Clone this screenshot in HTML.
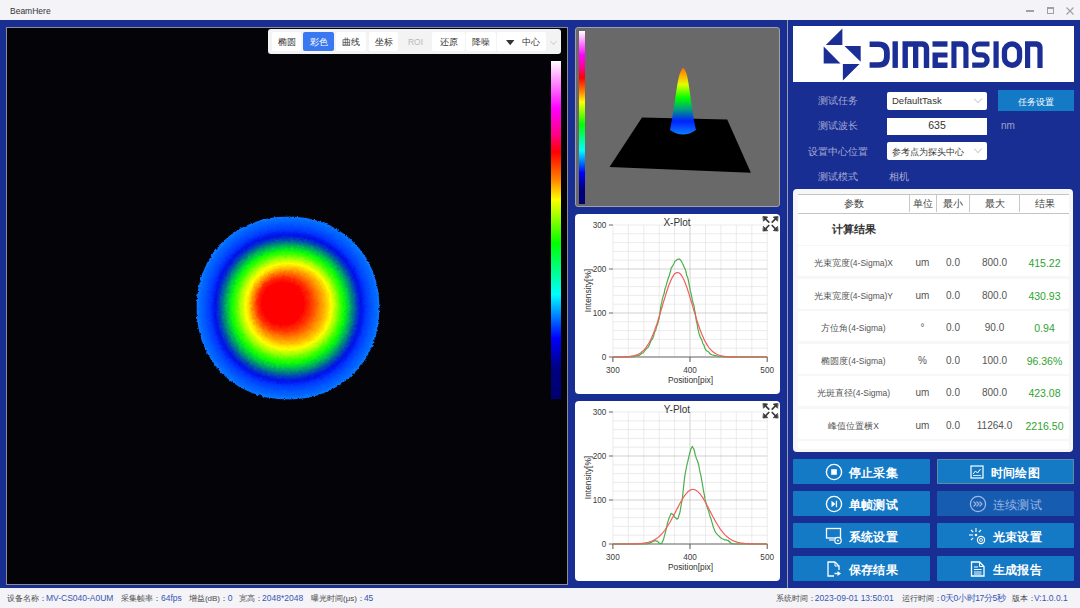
<!DOCTYPE html>
<html><head><meta charset="utf-8"><title>BeamHere</title>
<style>
*{box-sizing:border-box;margin:0;padding:0}
html,body{width:1080px;height:608px;overflow:hidden}
body{position:relative;background:#182e92;font-family:"Liberation Sans",sans-serif;color:#333}
.a{position:absolute}
#title{left:0;top:0;width:1080px;height:20px;background:#f3f3f8;font-size:9px;color:#333}
#status{left:0;top:588px;width:1080px;height:20px;background:#f3f3f8;font-size:8px;color:#4a4a4a;white-space:nowrap}
#status span,#status b{position:absolute;top:5px}
#status b{font-weight:normal;color:#3a56b0;font-size:8.5px;top:4.5px}
#left{left:6px;top:27px;width:562px;height:558px;background:#040408;border:1px solid #8c8c94}
#tb{left:268px;top:29px;width:293px;height:25px;background:#f3f3f3;border-radius:3px}
.tbb{position:absolute;top:3px;height:19px;background:#fff;border-radius:2px;font-size:8.5px;color:#333;text-align:center;line-height:21px}
.tbb.sel{background:#3a78f2;color:#fff}
.tbb.dis{background:transparent;color:#b8b8b8}
#beam{left:9px;top:9px;width:182px;height:182px;clip-path:polygon(182.3px 91.0px,182.1px 98.0px,181.6px 104.4px,180.6px 110.5px,179.4px 116.5px,177.7px 122.3px,175.7px 127.9px,173.4px 133.3px,170.7px 138.5px,167.7px 143.4px,164.4px 148.2px,160.8px 152.6px,156.8px 156.8px,152.6px 160.8px,148.2px 164.4px,143.4px 167.7px,138.5px 170.7px,133.3px 173.4px,127.9px 175.7px,122.3px 177.7px,116.5px 179.4px,110.5px 180.6px,104.4px 181.6px,98.0px 182.1px,91.0px 182.3px,84.0px 182.1px,77.6px 181.6px,71.5px 180.6px,65.5px 179.4px,59.7px 177.7px,54.1px 175.7px,48.7px 173.4px,43.5px 170.7px,38.6px 167.7px,33.8px 164.4px,29.4px 160.8px,25.2px 156.8px,21.2px 152.6px,17.6px 148.2px,14.3px 143.4px,11.3px 138.5px,8.6px 133.3px,6.3px 127.9px,4.3px 122.3px,2.6px 116.5px,1.4px 110.5px,0.4px 104.4px,-0.1px 98.0px,-0.3px 91.0px,-0.1px 84.0px,0.4px 77.6px,1.4px 71.5px,2.6px 65.5px,4.3px 59.7px,6.3px 54.1px,8.6px 48.7px,11.3px 43.5px,14.3px 38.6px,17.6px 33.8px,21.2px 29.4px,25.2px 25.2px,29.4px 21.2px,33.8px 17.6px,38.6px 14.3px,43.5px 11.3px,48.7px 8.6px,54.1px 6.3px,59.7px 4.3px,65.5px 2.6px,71.5px 1.4px,77.6px 0.4px,84.0px -0.1px,91.0px -0.3px,98.0px -0.1px,104.4px 0.4px,110.5px 1.4px,116.5px 2.6px,122.3px 4.3px,127.9px 6.3px,133.3px 8.6px,138.5px 11.3px,143.4px 14.3px,148.2px 17.6px,152.6px 21.2px,156.8px 25.2px,160.8px 29.4px,164.4px 33.8px,167.7px 38.6px,170.7px 43.5px,173.4px 48.7px,175.7px 54.1px,177.7px 59.7px,179.4px 65.5px,180.6px 71.5px,181.6px 77.6px,182.1px 84.0px);
 background:radial-gradient(circle at 85px 86px, #ff0000 0px, #ff0000 21px, rgba(255,40,0,0.6) 28px, rgba(255,128,0,0) 35px),
 radial-gradient(circle at 92px 89px, #ff8000 0px, #ff7000 29px, #ffc000 37px, #ffff00 43px, #a8ff00 48px, #40ff00 53px, rgba(0,255,0,0) 57px),
 radial-gradient(circle at 91px 91px, #20ff00 0px, #10ff00 55px, #00d040 60px, #008080 65px, #0040c0 69px, #0010e8 73px, #0038ff 78px, #0058ff 84px, #0a74ff 91px)}
#cbar{left:551px;top:61px;width:10px;height:338px;background:linear-gradient(to bottom, #ffffff 0%, #ff00ff 14%, #ff0080 22%, #ff0000 27%, #ff8000 35%, #ffff00 41%, #00ff00 54%, #00ffff 69%, #0000ff 82%, #000080 91%, #000070 100%)}
#p3d{left:575px;top:27px;width:205px;height:180px;background:#696969;border:1px solid #a0a0a8;border-radius:3px;overflow:hidden}
.plot{position:absolute;left:575px;width:205px;height:180px;background:#fff;border-radius:4px;overflow:hidden}
#sep{left:787px;top:20px;width:1px;height:568px;background:#9a9ca8}
#logo{left:793px;top:26px;width:281px;height:56px;background:#fff}
.lbl{position:absolute;font-size:10px;color:#a7abd2;white-space:nowrap;text-align:center}
.inp{position:absolute;left:887px;width:100px;background:#fff;border-radius:2px;font-size:9.5px;color:#333;white-space:nowrap}
.chev{position:absolute;right:6px;top:4px;width:6px;height:6px;border-right:1px solid #d0d0d0;border-bottom:1px solid #d0d0d0;transform:rotate(45deg)}
#tbl{left:793px;top:189px;width:280px;height:263px;background:#f7f7f7;border-radius:4px}
.row{position:absolute;left:5px;width:271px;height:30px;background:#fff;border-radius:2px;font-size:10px;color:#555}
.row span{position:absolute;top:1.5px;line-height:30px;text-align:center;white-space:nowrap}
.c0{left:0;width:111px;font-size:8.5px !important}
.c1{left:111px;width:27px}
.c2{left:139px;width:32px}
.c3{left:172px;width:49px}
.c4{left:222px;width:49px;color:#2fa32f;font-size:10.5px;font-weight:500}
.btn{position:absolute;width:137px;height:25px;background:#147ac6;color:#fff;font-size:12px;font-weight:700;border-radius:1px;white-space:nowrap}
.btn .t{position:absolute;top:1.5px;line-height:25px;letter-spacing:0.2px}
.btn svg{position:absolute}
</style></head>
<body>
<!-- title bar -->
<div id="title" class="a">
 <span class="a" style="left:10px;top:6px;font-size:8.5px">BeamHere</span>
 <div class="a" style="left:1026px;top:9.5px;width:8px;height:2px;background:#a0a0a0"></div>
 <div class="a" style="left:1046.5px;top:6.5px;width:7px;height:7.5px;border:1px solid #a0a0a0;border-top-width:2px"></div>
 <svg class="a" style="left:1066px;top:6.5px" width="8" height="8"><path d="M0.5 0.5L7.5 7.5M7.5 0.5L0.5 7.5" stroke="#a0a0a0" stroke-width="1.1"/></svg>
</div>

<!-- left camera view -->
<div id="left" class="a"></div>
<svg width="0" height="0" style="position:absolute"><filter id="jag" x="-5%" y="-5%" width="110%" height="110%"><feTurbulence type="fractalNoise" baseFrequency="0.35" numOctaves="2" seed="4" result="n"/><feDisplacementMap in="SourceGraphic" in2="n" scale="3.2" xChannelSelector="R" yChannelSelector="G"/></filter></svg>
<div class="a" style="left:188px;top:208px;width:200px;height:200px;filter:url(#jag)"><svg class="a" style="left:0;top:0" width="200" height="200"><g transform="translate(9 9)"><path d="M182.5 91.0L181.7 105.0L179.1 117.8L175.0 129.8L169.2 141.0L162.0 151.1L153.4 160.0L143.6 167.5L132.7 173.7L120.9 178.2L108.3 181.2L94.7 182.4L80.3 182.0L67.3 179.9L55.1 176.1L43.7 170.8L33.4 163.9L24.1 155.7L16.2 146.2L9.7 135.5L4.8 123.9L1.4 111.5L-0.3 98.2L-0.3 83.8L1.4 70.5L4.8 58.1L9.7 46.5L16.2 35.8L24.1 26.3L33.4 18.1L43.7 11.2L55.1 5.9L67.3 2.1L80.3 -0.0L94.7 -0.4L108.3 0.8L120.9 3.8L132.7 8.3L143.6 14.5L153.4 22.0L162.0 30.9L169.2 41.0L175.0 52.2L179.1 64.2L181.7 77.0Z" fill="#0976ff"/><path d="M181.5 91.0L180.7 104.8L178.2 117.5L174.0 129.4L168.4 140.4L161.2 150.4L152.7 159.2L143.0 166.7L132.3 172.8L120.6 177.3L108.1 180.2L94.7 181.4L80.5 181.0L67.6 178.9L55.5 175.2L44.2 169.9L34.0 163.1L24.9 155.0L17.0 145.6L10.6 135.0L5.7 123.6L2.4 111.3L0.7 98.2L0.7 83.8L2.4 70.7L5.7 58.4L10.6 47.0L17.0 36.4L24.9 27.0L34.0 18.9L44.2 12.1L55.5 6.8L67.6 3.1L80.5 1.0L94.7 0.6L108.1 1.8L120.6 4.7L132.3 9.2L143.0 15.3L152.7 22.8L161.2 31.6L168.4 41.6L174.0 52.6L178.2 64.5L180.7 77.2Z" fill="#0872ff"/><path d="M180.5 91.0L179.6 105.0L177.0 117.8L172.8 129.8L166.9 140.8L159.5 150.8L150.8 159.5L140.8 166.9L129.8 172.8L117.8 177.0L105.0 179.6L91.0 180.5L77.0 179.6L64.2 177.0L52.2 172.8L41.2 166.9L31.2 159.5L22.5 150.8L15.1 140.8L9.2 129.8L5.0 117.8L2.4 105.0L1.5 91.0L2.4 77.0L5.0 64.2L9.2 52.2L15.1 41.2L22.5 31.2L31.2 22.5L41.2 15.1L52.2 9.2L64.2 5.0L77.0 2.4L91.0 1.5L105.0 2.4L117.8 5.0L129.8 9.2L140.8 15.1L150.8 22.5L159.5 31.2L166.9 41.2L172.8 52.2L177.0 64.2L179.6 77.0Z" fill="#076dff"/><path d="M179.5 91.0L178.6 104.8L176.1 117.5L171.9 129.3L166.1 140.3L158.8 150.1L150.1 158.8L140.3 166.1L129.3 171.9L117.5 176.1L104.8 178.6L91.0 179.5L77.2 178.6L64.5 176.1L52.7 171.9L41.7 166.1L31.9 158.8L23.2 150.1L15.9 140.3L10.1 129.3L5.9 117.5L3.4 104.8L2.5 91.0L3.4 77.2L5.9 64.5L10.1 52.7L15.9 41.7L23.2 31.9L31.9 23.2L41.7 15.9L52.7 10.1L64.5 5.9L77.2 3.4L91.0 2.5L104.8 3.4L117.5 5.9L129.3 10.1L140.3 15.9L150.1 23.2L158.8 31.9L166.1 41.7L171.9 52.7L176.1 64.5L178.6 77.2Z" fill="#0569ff"/><path d="M178.5 91.0L177.6 105.0L175.0 117.7L170.6 129.7L164.6 140.7L157.1 150.5L148.2 159.1L138.0 166.3L126.8 171.8L114.6 175.8L101.6 178.0L87.3 178.4L73.8 177.1L61.2 174.0L49.5 169.3L38.8 162.9L29.2 155.0L21.0 145.7L14.2 135.3L9.0 123.8L5.5 111.5L3.7 98.2L3.7 83.8L5.5 70.5L9.0 58.2L14.2 46.7L21.0 36.3L29.2 27.0L38.8 19.1L49.5 12.7L61.2 8.0L73.8 4.9L87.3 3.6L101.6 4.0L114.6 6.2L126.8 10.2L138.0 15.7L148.2 22.9L157.1 31.5L164.6 41.3L170.6 52.3L175.0 64.3L177.6 77.0Z" fill="#0465ff"/><path d="M177.5 91.0L176.6 104.8L174.0 117.4L169.7 129.2L163.8 140.1L156.3 149.8L147.5 158.3L137.5 165.4L126.4 170.9L114.4 174.8L101.5 177.0L87.3 177.4L74.0 176.1L61.5 173.1L49.9 168.4L39.4 162.0L29.9 154.3L21.8 145.1L15.1 134.8L9.9 123.5L6.5 111.2L4.7 98.2L4.7 83.8L6.5 70.8L9.9 58.5L15.1 47.2L21.8 36.9L29.9 27.7L39.4 20.0L49.9 13.6L61.5 8.9L74.0 5.9L87.3 4.6L101.5 5.0L114.4 7.2L126.4 11.1L137.5 16.6L147.5 23.7L156.3 32.2L163.8 41.9L169.7 52.8L174.0 64.6L176.6 77.2Z" fill="#0361ff"/><path d="M176.5 91.0L175.6 105.0L172.9 117.7L168.4 129.6L162.3 140.5L154.6 150.2L145.5 158.6L135.2 165.6L123.8 170.9L111.4 174.5L98.2 176.3L83.8 176.3L70.6 174.5L58.2 170.9L46.8 165.6L36.5 158.6L27.4 150.2L19.7 140.5L13.6 129.6L9.1 117.7L6.4 105.0L5.5 91.0L6.4 77.0L9.1 64.3L13.6 52.4L19.7 41.5L27.4 31.8L36.5 23.4L46.8 16.4L58.2 11.1L70.6 7.5L83.8 5.7L98.2 5.7L111.4 7.5L123.8 11.1L135.2 16.4L145.5 23.4L154.6 31.8L162.3 41.5L168.4 52.4L172.9 64.3L175.6 77.0Z" fill="#015cff"/><path d="M175.5 91.0L174.6 104.8L171.9 117.4L167.5 129.2L161.5 139.9L153.9 149.5L144.9 157.8L134.7 164.7L123.4 169.9L111.2 173.5L98.1 175.3L83.9 175.3L70.8 173.5L58.6 169.9L47.3 164.7L37.1 157.8L28.1 149.5L20.5 139.9L14.5 129.2L10.1 117.4L7.4 104.8L6.5 91.0L7.4 77.2L10.1 64.6L14.5 52.8L20.5 42.1L28.1 32.5L37.1 24.2L47.3 17.3L58.6 12.1L70.8 8.5L83.9 6.7L98.1 6.7L111.2 8.5L123.4 12.1L134.7 17.3L144.9 24.2L153.9 32.5L161.5 42.1L167.5 52.8L171.9 64.6L174.6 77.2Z" fill="#0058ff"/><path d="M174.5 91.0L173.6 104.9L170.8 117.7L166.2 129.5L160.0 140.3L152.1 149.9L142.8 158.1L132.3 164.8L120.7 169.8L108.2 173.0L94.7 174.4L80.4 174.0L67.4 171.7L55.4 167.5L44.3 161.7L34.4 154.2L25.8 145.3L18.7 135.1L13.3 123.7L9.6 111.4L7.7 98.2L7.7 83.8L9.6 70.6L13.3 58.3L18.7 46.9L25.8 36.7L34.4 27.8L44.3 20.3L55.4 14.5L67.4 10.3L80.4 8.0L94.7 7.6L108.2 9.0L120.7 12.2L132.3 17.2L142.8 23.9L152.1 32.1L160.0 41.7L166.2 52.5L170.8 64.3L173.6 77.1Z" fill="#0053ff"/><path d="M173.5 91.0L172.6 104.8L169.8 117.4L165.3 129.1L159.1 139.7L151.4 149.2L142.2 157.3L131.8 163.9L120.4 168.9L108.0 172.1L94.7 173.4L80.5 173.0L67.7 170.7L55.8 166.6L44.8 160.8L35.0 153.5L26.6 144.6L19.6 134.5L14.2 123.3L10.6 111.2L8.7 98.1L8.7 83.9L10.6 70.8L14.2 58.7L19.6 47.5L26.6 37.4L35.0 28.5L44.8 21.2L55.8 15.4L67.7 11.3L80.5 9.0L94.7 8.6L108.0 9.9L120.4 13.1L131.8 18.1L142.2 24.7L151.4 32.8L159.1 42.3L165.3 52.9L169.8 64.6L172.6 77.2Z" fill="#004dff"/><path d="M172.5 91.0L171.5 104.9L168.7 117.6L164.0 129.4L157.6 140.1L149.6 149.6L140.1 157.6L129.4 164.0L117.6 168.7L104.9 171.5L91.0 172.5L77.1 171.5L64.4 168.7L52.6 164.0L41.9 157.6L32.4 149.6L24.4 140.1L18.0 129.4L13.3 117.6L10.5 104.9L9.5 91.0L10.5 77.1L13.3 64.4L18.0 52.6L24.4 41.9L32.4 32.4L41.9 24.4L52.6 18.0L64.4 13.3L77.1 10.5L91.0 9.5L104.9 10.5L117.6 13.3L129.4 18.0L140.1 24.4L149.6 32.4L157.6 41.9L164.0 52.6L168.7 64.4L171.5 77.1Z" fill="#0048ff"/><path d="M171.5 91.0L170.6 104.8L167.7 117.3L163.1 128.9L156.8 139.5L148.9 148.9L139.5 156.8L128.9 163.1L117.3 167.7L104.8 170.6L91.0 171.5L77.2 170.6L64.7 167.7L53.1 163.1L42.5 156.8L33.1 148.9L25.2 139.5L18.9 128.9L14.3 117.3L11.4 104.8L10.5 91.0L11.4 77.2L14.3 64.7L18.9 53.1L25.2 42.5L33.1 33.1L42.5 25.2L53.1 18.9L64.7 14.3L77.2 11.4L91.0 10.5L104.8 11.4L117.3 14.3L128.9 18.9L139.5 25.2L148.9 33.1L156.8 42.5L163.1 53.1L167.7 64.7L170.6 77.2Z" fill="#0043ff"/><path d="M170.5 91.0L169.5 104.9L166.6 117.6L161.8 129.3L155.2 139.9L147.0 149.2L137.4 157.0L126.5 163.2L114.5 167.5L101.6 169.9L87.3 170.4L73.8 169.0L61.4 165.6L49.9 160.3L39.6 153.3L30.7 144.8L23.3 134.8L17.6 123.6L13.7 111.4L11.7 98.2L11.7 83.8L13.7 70.6L17.6 58.4L23.3 47.2L30.7 37.2L39.6 28.7L49.9 21.7L61.4 16.4L73.8 13.0L87.3 11.6L101.6 12.1L114.5 14.5L126.5 18.8L137.4 25.0L147.0 32.8L155.2 42.1L161.8 52.7L166.6 64.4L169.5 77.1Z" fill="#003dff"/><path d="M169.5 91.0L168.5 104.7L165.6 117.3L160.9 128.8L154.4 139.3L146.3 148.5L136.8 156.2L126.0 162.3L114.2 166.5L101.5 169.0L87.3 169.4L74.0 168.0L61.8 164.6L50.4 159.5L40.3 152.6L31.4 144.1L24.1 134.2L18.5 123.2L14.7 111.1L12.7 98.1L12.7 83.9L14.7 70.9L18.5 58.8L24.1 47.8L31.4 37.9L40.3 29.4L50.4 22.5L61.8 17.4L74.0 14.0L87.3 12.6L101.5 13.0L114.2 15.5L126.0 19.7L136.8 25.8L146.3 33.5L154.4 42.7L160.9 53.2L165.6 64.7L168.5 77.3Z" fill="#0038ff"/><path d="M168.5 91.0L167.5 104.9L164.5 117.5L159.6 129.2L152.9 139.7L144.5 148.9L134.6 156.4L123.5 162.3L111.3 166.2L98.2 168.2L83.8 168.2L70.7 166.2L58.5 162.3L47.4 156.4L37.5 148.9L29.1 139.7L22.4 129.2L17.5 117.5L14.5 104.9L13.5 91.0L14.5 77.1L17.5 64.5L22.4 52.8L29.1 42.3L37.5 33.1L47.4 25.6L58.5 19.7L70.7 15.8L83.8 13.8L98.2 13.8L111.3 15.8L123.5 19.7L134.6 25.6L144.5 33.1L152.9 42.3L159.6 52.8L164.5 64.5L167.5 77.1Z" fill="#0030fa"/><path d="M167.5 91.0L166.5 104.7L163.5 117.2L158.7 128.7L152.1 139.1L143.8 148.1L134.1 155.6L123.1 161.4L111.1 165.3L98.1 167.3L83.9 167.3L70.9 165.3L58.9 161.4L47.9 155.6L38.2 148.1L29.9 139.1L23.3 128.7L18.5 117.2L15.5 104.7L14.5 91.0L15.5 77.3L18.5 64.8L23.3 53.3L29.9 42.9L38.2 33.9L47.9 26.4L58.9 20.6L70.9 16.7L83.9 14.7L98.1 14.7L111.1 16.7L123.1 20.6L134.1 26.4L143.8 33.9L152.1 42.9L158.7 53.3L163.5 64.8L166.5 77.3Z" fill="#0028f6"/><path d="M166.5 91.0L165.5 104.9L162.4 117.5L157.3 129.1L150.4 139.5L141.9 148.5L131.8 155.8L120.5 161.3L108.1 164.9L94.7 166.4L80.4 165.9L67.6 163.3L55.7 158.8L45.0 152.3L35.6 144.2L27.9 134.5L21.9 123.4L17.8 111.3L15.8 98.2L15.8 83.8L17.8 70.7L21.9 58.6L27.9 47.5L35.6 37.8L45.0 29.7L55.7 23.2L67.6 18.7L80.4 16.1L94.7 15.6L108.1 17.1L120.5 20.7L131.8 26.2L141.9 33.5L150.4 42.5L157.3 52.9L162.4 64.5L165.5 77.1Z" fill="#0020f1"/><path d="M165.5 91.0L164.5 104.7L161.4 117.2L156.5 128.6L149.7 138.8L141.2 147.7L131.3 154.9L120.1 160.4L107.9 163.9L94.7 165.4L80.6 164.9L67.9 162.4L56.2 157.9L45.6 151.5L36.4 143.5L28.7 133.9L22.8 123.0L18.8 111.0L16.8 98.1L16.8 83.9L18.8 71.0L22.8 59.0L28.7 48.1L36.4 38.5L45.6 30.5L56.2 24.1L67.9 19.6L80.6 17.1L94.7 16.6L107.9 18.1L120.1 21.6L131.3 27.1L141.2 34.3L149.7 43.2L156.5 53.4L161.4 64.8L164.5 77.3Z" fill="#0018ed"/><path d="M164.5 91.0L163.4 104.9L160.3 117.5L155.1 129.0L148.0 139.2L139.2 148.0L129.0 155.1L117.5 160.3L104.9 163.4L91.0 164.5L77.1 163.4L64.5 160.3L53.0 155.1L42.8 148.0L34.0 139.2L26.9 129.0L21.7 117.5L18.6 104.9L17.5 91.0L18.6 77.1L21.7 64.5L26.9 53.0L34.0 42.8L42.8 34.0L53.0 26.9L64.5 21.7L77.1 18.6L91.0 17.5L104.9 18.6L117.5 21.7L129.0 26.9L139.2 34.0L148.0 42.8L155.1 53.0L160.3 64.5L163.4 77.1Z" fill="#0010e8"/><path d="M163.5 91.0L162.5 104.7L159.3 117.1L154.2 128.5L147.2 138.6L138.6 147.2L128.5 154.2L117.1 159.3L104.7 162.5L91.0 163.5L77.3 162.5L64.9 159.3L53.5 154.2L43.4 147.2L34.8 138.6L27.8 128.5L22.7 117.1L19.5 104.7L18.5 91.0L19.5 77.3L22.7 64.9L27.8 53.5L34.8 43.4L43.4 34.8L53.5 27.8L64.9 22.7L77.3 19.5L91.0 18.5L104.7 19.5L117.1 22.7L128.5 27.8L138.6 34.8L147.2 43.4L154.2 53.5L159.3 64.9L162.5 77.3Z" fill="#001cde"/><path d="M162.5 91.0L161.4 104.9L158.2 117.4L152.8 128.9L145.6 139.0L136.6 147.6L126.1 154.3L114.4 159.2L101.6 161.9L87.3 162.4L73.9 160.8L61.6 157.0L50.5 151.2L40.7 143.5L32.6 134.1L26.3 123.3L22.0 111.3L19.8 98.2L19.8 83.8L22.0 70.7L26.3 58.7L32.6 47.9L40.7 38.5L50.5 30.8L61.6 25.0L73.9 21.2L87.3 19.6L101.6 20.1L114.4 22.8L126.1 27.7L136.6 34.4L145.6 43.0L152.8 53.1L158.2 64.6L161.4 77.1Z" fill="#0028d4"/><path d="M161.5 91.0L160.4 104.7L157.2 117.0L152.0 128.3L144.8 138.3L136.0 146.8L125.6 153.5L114.0 158.2L101.4 160.9L87.3 161.4L74.1 159.8L62.0 156.1L51.0 150.3L41.4 142.8L33.4 133.5L27.2 122.8L22.9 111.0L20.8 98.1L20.8 83.9L22.9 71.0L27.2 59.2L33.4 48.5L41.4 39.2L51.0 31.7L62.0 25.9L74.1 22.2L87.3 20.6L101.4 21.1L114.0 23.8L125.6 28.5L136.0 35.2L144.8 43.7L152.0 53.7L157.2 65.0L160.4 77.3Z" fill="#0034ca"/><path d="M160.5 91.0L159.4 104.8L156.0 117.3L150.5 128.7L143.1 138.7L133.9 147.0L123.2 153.5L111.2 157.9L98.2 160.2L83.8 160.2L70.8 157.9L58.8 153.5L48.1 147.0L38.9 138.7L31.5 128.7L26.0 117.3L22.6 104.8L21.5 91.0L22.6 77.1L26.0 64.6L31.5 53.2L38.9 43.3L48.1 34.9L58.8 28.4L70.8 24.0L83.8 21.7L98.2 21.7L111.2 24.0L123.2 28.4L133.9 34.9L143.1 43.3L150.5 53.2L156.0 64.6L159.4 77.1Z" fill="#0040c0"/><path d="M159.5 90.9L158.4 104.5L155.1 116.9L149.7 128.1L142.4 137.9L133.3 146.2L122.7 152.5L110.9 156.9L98.1 159.1L83.9 159.1L71.1 156.9L59.3 152.5L48.7 146.2L39.6 137.9L32.3 128.1L26.9 116.9L23.6 104.5L22.5 90.9L23.6 77.3L26.9 64.9L32.3 53.7L39.6 43.9L48.7 35.6L59.3 29.3L71.1 24.9L83.9 22.7L98.1 22.7L110.9 24.9L122.7 29.3L133.3 35.6L142.4 43.9L149.7 53.7L155.1 64.9L158.4 77.3Z" fill="#0050b0"/><path d="M158.5 90.8L157.3 104.7L153.9 117.1L148.3 128.4L140.6 138.2L131.2 146.4L120.2 152.5L108.0 156.5L94.7 158.3L80.5 157.7L67.7 154.8L56.1 149.7L45.9 142.5L37.3 133.5L30.7 122.9L26.1 111.0L23.8 98.0L23.8 83.7L26.1 70.6L30.7 58.7L37.3 48.1L45.9 39.1L56.1 32.0L67.7 26.9L80.5 24.0L94.7 23.4L108.0 25.1L120.2 29.2L131.2 35.3L140.6 43.4L148.3 53.3L153.9 64.5L157.3 77.0Z" fill="#0060a0"/><path d="M157.5 90.8L156.4 104.4L153.0 116.7L147.4 127.8L139.9 137.5L130.6 145.5L119.8 151.5L107.8 155.5L94.7 157.2L80.6 156.6L68.1 153.8L56.6 148.8L46.6 141.7L38.1 132.8L31.6 122.4L27.1 110.7L24.8 97.8L24.8 83.7L27.1 70.9L31.6 59.1L38.1 48.7L46.6 39.8L56.6 32.8L68.1 27.8L80.6 24.9L94.7 24.3L107.8 26.1L119.8 30.0L130.6 36.1L139.9 44.1L147.4 53.7L153.0 64.9L156.4 77.1Z" fill="#007090"/><path d="M156.5 90.7L155.3 104.5L151.7 116.9L145.9 128.1L138.1 137.8L128.4 145.6L117.2 151.4L104.8 155.0L91.0 156.2L77.2 155.0L64.8 151.4L53.6 145.6L43.9 137.8L36.1 128.1L30.3 116.9L26.7 104.5L25.5 90.7L26.7 76.9L30.3 64.5L36.1 53.3L43.9 43.6L53.6 35.8L64.8 30.0L77.2 26.4L91.0 25.2L104.8 26.4L117.2 30.0L128.4 35.8L138.1 43.6L145.9 53.3L151.7 64.5L155.3 76.9Z" fill="#008080"/><path d="M155.5 90.6L154.3 104.2L150.8 116.5L145.1 127.5L137.4 137.0L127.9 144.7L116.8 150.4L104.6 154.0L91.0 155.1L77.4 154.0L65.2 150.4L54.1 144.7L44.6 137.0L36.9 127.5L31.2 116.5L27.7 104.2L26.5 90.6L27.7 77.0L31.2 64.8L36.9 53.8L44.6 44.3L54.1 36.5L65.2 30.8L77.4 27.3L91.0 26.1L104.6 27.3L116.8 30.8L127.9 36.5L137.4 44.3L145.1 53.8L150.8 64.8L154.3 77.0Z" fill="#009073"/><path d="M154.5 90.6L153.3 104.4L149.6 116.7L143.6 127.8L135.5 137.3L125.6 144.9L114.2 150.3L101.5 153.4L87.3 154.0L74.0 152.1L61.9 147.9L51.2 141.3L42.2 132.8L35.1 122.5L30.3 110.7L27.8 97.7L27.8 83.4L30.3 70.4L35.1 58.7L42.2 48.4L51.2 39.8L61.9 33.3L74.0 29.0L87.3 27.1L101.5 27.8L114.2 30.8L125.6 36.3L135.5 43.8L143.6 53.3L149.6 64.4L153.3 76.8Z" fill="#00a066"/><path d="M153.5 90.5L152.3 104.1L148.7 116.3L142.8 127.2L134.8 136.5L125.1 144.0L113.8 149.3L101.4 152.3L87.4 152.9L74.3 151.1L62.4 146.9L51.8 140.5L43.0 132.1L36.0 121.9L31.2 110.3L28.8 97.6L28.8 83.4L31.2 70.7L36.0 59.1L43.0 48.9L51.8 40.5L62.4 34.1L74.3 29.9L87.4 28.1L101.4 28.7L113.8 31.7L125.1 37.0L134.8 44.5L142.8 53.8L148.7 64.7L152.3 76.9Z" fill="#00b05a"/><path d="M152.5 90.4L151.2 104.2L147.4 116.5L141.3 127.5L132.9 136.8L122.8 144.1L111.1 149.1L98.2 151.6L83.8 151.6L70.9 149.1L59.2 144.1L49.1 136.8L40.7 127.5L34.6 116.5L30.8 104.2L29.5 90.4L30.8 76.7L34.6 64.3L40.7 53.4L49.1 44.1L59.2 36.8L70.9 31.8L83.8 29.3L98.2 29.3L111.1 31.8L122.8 36.8L132.9 44.1L141.3 53.4L147.4 64.3L151.2 76.7Z" fill="#00c04d"/><path d="M151.5 90.4L150.2 103.9L146.5 116.1L140.4 126.8L132.3 136.0L122.3 143.1L110.8 148.0L98.0 150.6L84.0 150.6L71.2 148.0L59.7 143.1L49.7 136.0L41.6 126.8L35.5 116.1L31.8 103.9L30.5 90.4L31.8 76.8L35.5 64.7L41.6 53.9L49.7 44.8L59.7 37.6L71.2 32.7L84.0 30.2L98.0 30.2L110.8 32.7L122.3 37.6L132.3 44.8L140.4 53.9L146.5 64.7L150.2 76.8Z" fill="#00d040"/><path d="M150.5 90.3L149.2 104.1L145.3 116.3L138.9 127.2L130.3 136.2L119.9 143.2L107.9 147.7L94.7 149.7L80.5 149.1L67.9 145.8L56.7 140.0L47.1 132.0L39.6 122.0L34.5 110.4L31.8 97.5L31.8 83.1L34.5 70.2L39.6 58.6L47.1 48.6L56.7 40.6L67.9 34.8L80.5 31.5L94.7 30.9L107.9 32.9L119.9 37.4L130.3 44.4L138.9 53.4L145.3 64.3L149.2 76.5Z" fill="#04dc30"/><path d="M149.5 90.2L148.2 103.8L144.3 115.8L138.1 126.5L129.7 135.4L119.4 142.2L107.7 146.7L94.6 148.7L80.7 148.0L68.3 144.8L57.3 139.1L47.9 131.2L40.5 121.4L35.4 110.0L32.8 97.3L32.8 83.2L35.4 70.5L40.5 59.1L47.9 49.3L57.3 41.4L68.3 35.7L80.7 32.5L94.6 31.8L107.7 33.8L119.4 38.2L129.7 45.1L138.1 54.0L144.3 64.6L148.2 76.7Z" fill="#08e820"/><path d="M148.5 90.2L147.1 103.9L143.1 116.1L136.5 126.8L127.7 135.7L117.0 142.2L104.7 146.3L91.0 147.7L77.3 146.3L65.0 142.2L54.3 135.7L45.5 126.8L38.9 116.1L34.9 103.9L33.5 90.2L34.9 76.4L38.9 64.2L45.5 53.5L54.3 44.7L65.0 38.1L77.3 34.0L91.0 32.7L104.7 34.0L117.0 38.1L127.7 44.7L136.5 53.5L143.1 64.2L147.1 76.4Z" fill="#0cf310"/><path d="M147.5 90.1L146.2 103.6L142.2 115.6L135.7 126.1L127.0 134.8L116.5 141.3L104.5 145.3L91.0 146.6L77.5 145.3L65.5 141.3L55.0 134.8L46.3 126.1L39.8 115.6L35.8 103.6L34.5 90.1L35.8 76.6L39.8 64.6L46.3 54.1L55.0 45.4L65.5 38.9L77.5 34.9L91.0 33.6L104.5 34.9L116.5 38.9L127.0 45.4L135.7 54.1L142.2 64.6L146.2 76.6Z" fill="#10ff00"/><path d="M146.5 90.0L145.1 103.8L140.9 115.9L134.1 126.5L125.0 135.0L114.0 141.2L101.5 144.7L87.3 145.4L74.1 143.3L62.3 138.4L52.2 131.0L44.2 121.4L38.7 110.0L35.9 97.2L35.9 82.9L38.7 70.1L44.2 58.7L52.2 49.0L62.3 41.6L74.1 36.8L87.3 34.6L101.5 35.3L114.0 38.9L125.0 45.0L134.1 53.6L140.9 64.2L145.1 76.3Z" fill="#20ff00"/><path d="M145.5 90.0L144.1 103.4L140.0 115.4L133.3 125.7L124.4 134.1L113.6 140.2L101.3 143.7L87.4 144.4L74.4 142.3L62.9 137.5L52.9 130.2L45.1 120.8L39.7 109.6L36.9 97.0L36.9 83.0L39.7 70.3L45.1 59.2L52.9 49.7L62.9 42.4L74.4 37.6L87.4 35.6L101.3 36.3L113.6 39.7L124.4 45.8L133.3 54.2L140.0 64.6L144.1 76.5Z" fill="#30ff00"/><path d="M144.6 89.9L143.1 103.6L138.7 115.7L131.7 126.1L122.3 134.3L111.0 140.1L98.2 143.0L83.9 143.0L71.1 140.1L59.8 134.3L50.4 126.1L43.4 115.7L39.0 103.6L37.5 89.9L39.0 76.2L43.4 64.1L50.4 53.7L59.8 45.5L71.1 39.7L83.9 36.8L98.2 36.8L111.0 39.7L122.3 45.5L131.7 53.7L138.7 64.1L143.1 76.2Z" fill="#40ff00"/><path d="M143.6 89.8L142.1 103.3L137.8 115.1L130.9 125.3L121.7 133.4L110.6 139.1L98.1 142.0L84.1 142.0L71.5 139.1L60.4 133.4L51.2 125.3L44.3 115.1L40.0 103.3L38.6 89.8L40.0 76.4L44.3 64.5L51.2 54.3L60.4 46.2L71.5 40.6L84.1 37.7L98.1 37.7L110.6 40.6L121.7 46.2L130.9 54.3L137.8 64.5L142.1 76.4Z" fill="#55ff00"/><path d="M142.6 89.8L141.1 103.5L136.5 115.5L129.2 125.7L119.5 133.6L107.9 138.9L94.8 141.2L80.7 140.4L68.3 136.6L57.6 129.9L49.0 120.8L43.1 109.6L40.0 96.9L40.0 82.6L43.1 69.9L49.0 58.7L57.6 49.6L68.3 42.9L80.7 39.1L94.8 38.4L107.9 40.7L119.5 45.9L129.2 53.9L136.5 64.1L141.1 76.1Z" fill="#6aff00"/><path d="M141.7 89.7L140.1 103.1L135.7 114.9L128.5 124.9L119.0 132.7L107.7 137.8L94.8 140.1L80.9 139.3L68.8 135.6L58.3 129.1L49.9 120.1L44.0 109.2L41.0 96.7L41.0 82.7L44.0 70.2L49.9 59.3L58.3 50.3L68.8 43.8L80.9 40.1L94.8 39.3L107.7 41.6L119.0 46.7L128.5 54.5L135.7 64.5L140.1 76.3Z" fill="#7eff00"/><path d="M140.7 89.6L139.1 103.3L134.3 115.2L126.8 125.2L116.8 132.8L104.8 137.5L91.2 139.1L77.5 137.5L65.6 132.8L55.6 125.2L48.0 115.2L43.3 103.3L41.7 89.6L43.3 76.0L48.0 64.1L55.6 54.0L65.6 46.5L77.5 41.7L91.2 40.1L104.8 41.7L116.8 46.5L126.8 54.0L134.3 64.1L139.1 76.0Z" fill="#93ff00"/><path d="M139.7 89.6L138.1 103.0L133.5 114.6L126.1 124.4L116.3 131.9L104.6 136.5L91.2 138.1L77.8 136.5L66.2 131.9L56.4 124.4L48.9 114.6L44.3 103.0L42.7 89.6L44.3 76.2L48.9 64.5L56.4 54.7L66.2 47.3L77.8 42.6L91.2 41.1L104.6 42.6L116.3 47.3L126.1 54.7L133.5 64.5L138.1 76.2Z" fill="#a8ff00"/><path d="M138.8 89.5L137.1 103.1L132.1 115.0L124.3 124.7L113.9 131.9L101.7 136.1L87.6 136.9L74.5 134.4L63.1 128.7L54.0 120.1L47.5 109.3L44.2 96.6L44.2 82.4L47.5 69.7L54.0 58.9L63.1 50.3L74.5 44.6L87.6 42.1L101.7 42.9L113.9 47.1L124.3 54.3L132.1 64.0L137.1 75.9Z" fill="#b9ff00"/><path d="M137.8 89.4L136.1 102.8L131.3 114.4L123.6 123.9L113.5 131.0L101.5 135.0L87.7 135.8L74.9 133.4L63.8 127.8L54.8 119.4L48.5 108.8L45.2 96.4L45.2 82.5L48.5 70.1L54.8 59.4L63.8 51.1L74.9 45.5L87.7 43.0L101.5 43.9L113.5 47.9L123.6 54.9L131.3 64.5L136.1 76.1Z" fill="#cbff00"/><path d="M136.8 89.4L135.1 103.0L129.9 114.7L121.7 124.2L111.0 130.9L98.4 134.4L84.2 134.4L71.6 130.9L60.9 124.2L52.7 114.7L47.6 103.0L45.8 89.4L47.6 75.8L52.7 64.0L60.9 54.5L71.6 47.8L84.2 44.3L98.4 44.3L111.0 47.8L121.7 54.5L129.9 64.0L135.1 75.8Z" fill="#dcff00"/><path d="M135.8 89.3L134.1 102.6L129.1 114.1L121.1 123.4L110.6 130.0L98.3 133.4L84.4 133.4L72.1 130.0L61.6 123.4L53.6 114.1L48.6 102.6L46.8 89.3L48.6 76.0L53.6 64.5L61.6 55.2L72.1 48.6L84.4 45.2L98.3 45.2L110.6 48.6L121.1 55.2L129.1 64.5L134.1 76.0Z" fill="#eeff00"/><path d="M134.9 89.2L133.0 102.8L127.7 114.4L119.1 123.6L108.1 129.9L95.1 132.6L81.0 131.7L68.9 127.2L59.0 119.4L52.0 108.9L48.3 96.3L48.3 82.1L52.0 69.6L59.0 59.1L68.9 51.3L81.0 46.8L95.1 45.8L108.1 48.6L119.1 54.8L127.7 64.0L133.0 75.6Z" fill="#ffff00"/><path d="M133.9 89.2L132.1 102.4L126.9 113.8L118.5 122.8L107.7 128.9L95.0 131.6L81.3 130.7L69.5 126.2L59.8 118.6L52.9 108.4L49.4 96.1L49.4 82.2L52.9 70.0L59.8 59.7L69.5 52.1L81.3 47.7L95.0 46.8L107.7 49.5L118.5 55.5L126.9 64.6L132.1 75.9Z" fill="#fff200"/><path d="M132.9 89.1L131.0 102.7L125.4 114.1L116.5 123.0L105.0 128.7L91.5 130.6L77.9 128.7L66.4 123.0L57.5 114.1L51.9 102.7L50.0 89.1L51.9 75.5L57.5 64.1L66.4 55.2L77.9 49.5L91.4 47.6L105.0 49.5L116.5 55.2L125.4 64.1L131.0 75.5Z" fill="#ffe500"/><path d="M132.0 89.0L130.1 102.3L124.6 113.4L115.9 122.1L104.7 127.6L91.5 129.5L78.2 127.6L67.1 122.1L58.4 113.4L52.9 102.3L51.0 89.0L52.9 75.8L58.4 64.6L67.1 55.9L78.2 50.4L91.5 48.5L104.7 50.4L115.9 55.9L124.6 64.6L130.1 75.8Z" fill="#ffd800"/><path d="M130.8 88.9L128.8 102.4L122.8 113.7L113.6 122.3L101.7 127.3L87.6 128.3L74.7 125.2L64.1 118.4L56.4 108.4L52.3 96.0L52.3 81.8L56.4 69.4L64.1 59.4L74.7 52.6L87.6 49.5L101.7 50.6L113.6 55.6L122.8 64.1L128.8 75.4Z" fill="#ffca00"/><path d="M129.4 88.8L127.5 101.9L121.7 113.0L112.6 121.3L101.1 126.1L87.4 127.1L74.8 124.2L64.4 117.5L56.9 107.7L53.0 95.7L53.0 81.8L56.9 69.8L64.4 60.0L74.8 53.3L87.4 50.4L101.1 51.4L112.6 56.2L121.7 64.5L127.5 75.6Z" fill="#ffbd00"/><path d="M128.1 88.6L125.9 102.1L119.7 113.2L110.0 121.3L97.7 125.5L83.5 125.5L71.2 121.3L61.5 113.2L55.2 102.1L53.1 88.6L55.2 75.1L61.5 64.0L71.2 55.9L83.5 51.6L97.7 51.6L110.0 55.9L119.7 64.0L125.9 75.1Z" fill="#ffb000"/><path d="M126.7 88.4L124.6 101.6L118.5 112.4L109.1 120.2L97.1 124.4L83.3 124.4L71.4 120.2L61.9 112.4L55.8 101.6L53.7 88.4L55.8 75.3L61.9 64.5L71.4 56.6L83.3 52.4L97.1 52.4L109.1 56.6L118.5 64.5L124.6 75.3Z" fill="#ffa300"/><path d="M125.3 88.2L123.1 101.7L116.5 112.6L106.3 120.2L93.5 123.6L79.5 122.5L67.9 116.9L59.4 107.5L54.9 95.3L54.9 81.2L59.4 69.0L67.9 59.6L79.5 54.0L93.5 52.9L106.3 56.3L116.5 63.9L123.1 74.8Z" fill="#ff9600"/><path d="M124.0 88.1L121.8 101.2L115.3 111.8L105.5 119.1L93.0 122.4L79.4 121.3L68.2 115.9L59.9 106.8L55.5 95.0L55.5 81.2L59.9 69.4L68.2 60.3L79.4 54.8L93.0 53.7L105.5 57.0L115.3 64.4L121.8 75.0Z" fill="#ff8a00"/><path d="M122.6 87.9L120.2 101.3L113.2 112.0L102.5 119.0L89.1 121.4L75.7 119.0L65.0 112.0L58.0 101.3L55.6 87.9L58.0 74.5L65.0 63.8L75.7 56.8L89.1 54.4L102.5 56.8L113.2 63.8L120.2 74.5Z" fill="#ff7d00"/><path d="M121.2 87.8L118.9 100.8L112.1 111.1L101.8 117.9L88.8 120.2L75.7 117.9L65.4 111.1L58.6 100.8L56.2 87.8L58.6 74.7L65.4 64.4L75.7 57.6L88.7 55.2L101.8 57.6L112.1 64.4L118.9 74.7Z" fill="#ff7000"/><path d="M119.9 87.6L117.6 100.2L111.0 110.2L101.0 116.8L88.4 119.1L75.8 116.8L65.7 110.2L59.2 100.2L56.9 87.6L59.2 75.0L65.7 64.9L75.8 58.4L88.4 56.1L101.0 58.4L111.0 64.9L117.6 75.0Z" fill="#ff6300"/><path d="M118.5 87.4L116.3 99.6L109.9 109.3L100.2 115.7L88.0 117.9L75.8 115.7L66.1 109.3L59.7 99.6L57.5 87.4L59.7 75.2L66.1 65.5L75.8 59.1L88.0 56.9L100.2 59.1L109.9 65.5L116.3 75.2Z" fill="#ff5600"/><path d="M117.2 87.2L115.0 99.1L108.9 108.5L99.5 114.6L87.7 116.8L75.8 114.6L66.4 108.5L60.3 99.1L58.2 87.3L60.3 75.4L66.4 66.0L75.8 59.9L87.6 57.8L99.5 59.9L108.9 66.0L115.0 75.4Z" fill="#ff4a00"/><path d="M115.8 87.1L113.7 98.5L107.8 107.6L98.7 113.5L87.3 115.6L75.9 113.5L66.8 107.6L60.9 98.5L58.8 87.1L60.9 75.7L66.8 66.6L75.9 60.7L87.3 58.6L98.7 60.7L107.8 66.6L113.7 75.7Z" fill="#ff3d00"/><path d="M114.4 86.9L112.4 97.9L106.7 106.7L97.9 112.4L86.9 114.4L75.9 112.4L67.1 106.7L61.4 97.9L59.4 86.9L61.4 75.9L67.1 67.1L75.9 61.4L86.9 59.4L97.9 61.4L106.7 67.1L112.4 75.9Z" fill="#ff3000"/><path d="M113.0 86.8L111.1 97.4L105.6 105.8L97.2 111.3L86.6 113.2L75.9 111.3L67.5 105.8L62.0 97.4L60.0 86.8L62.0 76.1L67.5 67.7L75.9 62.2L86.5 60.2L97.2 62.2L105.6 67.7L111.1 76.1Z" fill="#ff2800"/><path d="M111.7 86.6L109.8 96.8L104.5 104.9L96.4 110.2L86.2 112.1L76.0 110.2L67.9 104.9L62.5 96.8L60.7 86.6L62.5 76.4L67.9 68.3L76.0 62.9L86.2 61.1L96.4 62.9L104.5 68.3L109.8 76.4Z" fill="#ff2000"/><path d="M110.5 86.5L108.7 96.3L103.6 104.1L95.8 109.2L86.0 111.0L76.2 109.2L68.4 104.1L63.3 96.3L61.5 86.5L63.3 76.7L68.4 68.9L76.2 63.8L86.0 62.0L95.8 63.8L103.6 68.9L108.7 76.7Z" fill="#ff1800"/><path d="M109.5 86.5L107.8 95.9L102.9 103.4L95.4 108.3L86.0 110.0L76.6 108.3L69.1 103.4L64.2 95.9L62.5 86.5L64.2 77.1L69.1 69.6L76.6 64.7L86.0 63.0L95.4 64.7L102.9 69.6L107.8 77.1Z" fill="#ff1000"/><path d="M108.5 86.5L106.8 95.5L102.1 102.7L95.0 107.4L86.0 109.0L76.9 107.4L69.8 102.7L65.1 95.5L63.5 86.5L65.1 77.5L69.8 70.3L76.9 65.6L85.9 64.0L95.0 65.6L102.1 70.3L106.8 77.5Z" fill="#ff0800"/><path d="M107.4 86.5L105.9 95.1L101.4 102.0L94.5 106.4L85.9 108.0L77.3 106.4L70.5 102.0L66.0 95.1L64.4 86.5L66.0 77.9L70.5 71.0L77.3 66.6L85.9 65.0L94.5 66.6L101.4 71.0L105.9 77.9Z" fill="#ff0000"/><path d="M106.4 86.5L104.9 94.7L100.6 101.2L94.1 105.5L85.9 107.0L77.7 105.5L71.2 101.2L66.9 94.7L65.4 86.5L66.9 78.3L71.2 71.8L77.7 67.5L85.9 66.0L94.1 67.5L100.6 71.8L104.9 78.3Z" fill="#ff0000"/><path d="M105.4 86.5L104.0 94.3L99.9 100.5L93.7 104.6L85.9 106.0L78.1 104.6L71.9 100.5L67.8 94.3L66.4 86.5L67.8 78.7L71.9 72.5L78.1 68.4L85.9 67.0L93.7 68.4L99.9 72.5L104.0 78.7Z" fill="#ff0000"/><path d="M104.4 86.5L103.0 93.9L99.2 99.8L93.3 103.7L85.9 105.0L78.5 103.7L72.6 99.8L68.7 93.9L67.4 86.5L68.7 79.1L72.6 73.2L78.5 69.3L85.9 68.0L93.3 69.3L99.2 73.2L103.0 79.1Z" fill="#ff0000"/><path d="M103.3 86.5L102.1 93.5L98.4 99.1L92.9 102.7L85.8 104.0L78.8 102.7L73.3 99.1L69.6 93.5L68.3 86.5L69.6 79.5L73.3 73.9L78.8 70.3L85.8 69.0L92.9 70.3L98.4 73.9L102.1 79.5Z" fill="#ff0000"/><path d="M102.3 86.5L101.1 93.1L97.7 98.4L92.4 101.8L85.8 103.0L79.2 101.8L74.0 98.4L70.5 93.1L69.3 86.5L70.5 79.9L74.0 74.6L79.2 71.2L85.8 70.0L92.4 71.2L97.7 74.6L101.1 79.9Z" fill="#ff0000"/><path d="M101.3 86.5L100.2 92.7L97.0 97.6L92.0 100.9L85.8 102.0L79.6 100.9L74.7 97.6L71.4 92.7L70.3 86.5L71.4 80.3L74.7 75.4L79.6 72.1L85.8 71.0L92.0 72.1L97.0 75.4L100.2 80.3Z" fill="#ff0000"/><path d="M100.3 86.5L99.2 92.3L96.2 96.9L91.6 99.9L85.8 101.0L80.0 99.9L75.4 96.9L72.3 92.3L71.3 86.5L72.3 80.7L75.4 76.1L80.0 73.1L85.8 72.0L91.6 73.1L96.2 76.1L99.2 80.7Z" fill="#ff0000"/><path d="M99.3 86.5L98.3 91.9L95.5 96.2L91.2 99.0L85.8 100.0L80.4 99.0L76.1 96.2L73.3 91.9L72.3 86.5L73.3 81.1L76.1 76.8L80.4 74.0L85.8 73.0L91.2 74.0L95.5 76.8L98.3 81.1Z" fill="#ff0000"/><path d="M98.2 86.5L97.3 91.5L94.7 95.5L90.8 98.1L85.8 99.0L80.7 98.1L76.8 95.5L74.2 91.5L73.2 86.5L74.2 81.5L76.8 77.5L80.7 74.9L85.7 74.0L90.8 74.9L94.7 77.5L97.3 81.5Z" fill="#ff0000"/><path d="M97.2 86.5L96.4 91.1L94.0 94.8L90.3 97.2L85.7 98.0L81.1 97.2L77.5 94.8L75.1 91.1L74.2 86.5L75.1 81.9L77.5 78.2L81.1 75.8L85.7 75.0L90.3 75.8L94.0 78.2L96.4 81.9Z" fill="#ff0000"/><path d="M96.2 86.5L95.4 90.7L93.3 94.0L89.9 96.2L85.7 97.0L81.5 96.2L78.2 94.0L76.0 90.7L75.2 86.5L76.0 82.3L78.2 79.0L81.5 76.8L85.7 76.0L89.9 76.8L93.3 79.0L95.4 82.3Z" fill="#ff0000"/><path d="M95.2 86.5L94.5 90.3L92.5 93.3L89.5 95.3L85.7 96.0L81.9 95.3L78.9 93.3L76.9 90.3L76.2 86.5L76.9 82.7L78.9 79.7L81.9 77.7L85.7 77.0L89.5 77.7L92.5 79.7L94.5 82.7Z" fill="#ff0000"/><path d="M94.2 86.5L93.6 89.9L91.8 92.6L89.1 94.4L85.7 95.0L82.3 94.4L79.6 92.6L77.8 89.9L77.2 86.5L77.8 83.1L79.6 80.4L82.3 78.6L85.7 78.0L89.1 78.6L91.8 80.4L93.6 83.1Z" fill="#ff0000"/><path d="M93.2 86.5L92.6 89.5L91.0 91.9L88.7 93.5L85.7 94.0L82.6 93.5L80.3 91.9L78.7 89.5L78.2 86.5L78.7 83.5L80.3 81.1L82.6 79.5L85.6 79.0L88.7 79.5L91.0 81.1L92.6 83.5Z" fill="#ff0000"/><path d="M92.1 86.5L91.7 89.1L90.3 91.2L88.2 92.5L85.6 93.0L83.0 92.5L81.0 91.2L79.6 89.1L79.1 86.5L79.6 83.9L81.0 81.8L83.0 80.5L85.6 80.0L88.2 80.5L90.3 81.8L91.7 83.9Z" fill="#ff0000"/><path d="M91.1 86.5L90.7 88.7L89.6 90.5L87.8 91.6L85.6 92.0L83.4 91.6L81.7 90.5L80.5 88.7L80.1 86.5L80.5 84.3L81.7 82.5L83.4 81.4L85.6 81.0L87.8 81.4L89.6 82.5L90.7 84.3Z" fill="#ff0000"/><path d="M90.1 86.5L89.8 88.3L88.8 89.7L87.4 90.7L85.6 91.0L83.8 90.7L82.4 89.7L81.4 88.3L81.1 86.5L81.4 84.7L82.4 83.3L83.8 82.3L85.6 82.0L87.4 82.3L88.8 83.3L89.8 84.7Z" fill="#ff0000"/><path d="M89.1 86.5L88.8 87.9L88.1 89.0L87.0 89.7L85.6 90.0L84.2 89.7L83.1 89.0L82.3 87.9L82.1 86.5L82.3 85.1L83.1 84.0L84.2 83.3L85.6 83.0L87.0 83.3L88.1 84.0L88.8 85.1Z" fill="#ff0000"/><path d="M88.0 86.5L87.9 87.5L87.3 88.3L86.6 88.8L85.5 89.0L84.5 88.8L83.8 88.3L83.2 87.5L83.0 86.5L83.2 85.5L83.8 84.7L84.5 84.2L85.5 84.0L86.6 84.2L87.3 84.7L87.9 85.5Z" fill="#ff0000"/><path d="M87.0 86.5L86.9 87.1L86.6 87.6L86.1 87.9L85.5 88.0L84.9 87.9L84.5 87.6L84.1 87.1L84.0 86.5L84.1 85.9L84.5 85.4L84.9 85.1L85.5 85.0L86.1 85.1L86.6 85.4L86.9 85.9Z" fill="#ff0000"/></g></svg></div>
<div id="cbar" class="a"></div>
<div id="tb" class="a">
 <div class="tbb" style="left:4px;width:29px">椭圆</div>
 <div class="tbb sel" style="left:35px;width:31px">彩色</div>
 <div class="tbb" style="left:68px;width:30px">曲线</div>
 <div class="tbb" style="left:101px;width:29px">坐标</div>
 <div class="tbb dis" style="left:133px;width:29px">ROI</div>
 <div class="tbb" style="left:164px;width:33px">还原</div>
 <div class="tbb" style="left:198px;width:30px">降噪</div>
 <div class="tbb" style="left:229px;width:49px;text-align:left"><svg class="a" style="left:9px;top:7.5px" width="9" height="6"><path d="M0 0H8.4L4.2 5.2Z" fill="#333"/></svg><span class="a" style="left:25px">中心</span></div>
 <div class="a" style="left:283px;top:10px;width:5px;height:5px;border-right:1px solid #d4d4d4;border-bottom:1px solid #d4d4d4;transform:rotate(45deg)"></div>
</div>

<!-- 3D view -->
<div id="p3d" class="a">
 <div class="a" style="left:3px;top:3px;width:6px;height:173px;background:linear-gradient(to bottom, #ffffff 0%, #ff00ff 14%, #ff0080 22%, #ff0000 27%, #ff8000 35%, #ffff00 41%, #00ff00 54%, #00ffff 69%, #0000ff 82%, #000080 91%, #000070 100%)"></div>
 <svg class="a" style="left:-1px;top:-1px" width="205" height="180">
  <defs>
   <linearGradient id="pk" x1="0" y1="0" x2="0" y2="1">
    <stop offset="0" stop-color="#ff7000"/>
    <stop offset="0.12" stop-color="#ffb000"/>
    <stop offset="0.25" stop-color="#e0ff00"/>
    <stop offset="0.45" stop-color="#00ff00"/>
    <stop offset="0.62" stop-color="#00a080"/>
    <stop offset="0.8" stop-color="#0020ff"/>
    <stop offset="1" stop-color="#0a80ff"/>
   </linearGradient>
  </defs>
  <polygon points="67,90.6 152.2,92.6 175.9,145.8 34.5,139.9" fill="#000"/>
  <path d="M95 103 C 100 80, 102 50, 106 44 Q 108.2 38, 110.4 44 C 114 50, 116 80, 121 103 Q 108 112, 95 103 Z" fill="url(#pk)"/>
 </svg>
</div>

<!-- plots -->
<div class="plot" style="top:214px"><svg width="205" height="180" viewBox="0 0 205 180" style="position:absolute;left:0;top:0"><line x1="37.9" y1="11" x2="37.9" y2="143" stroke="#e3e3e3" stroke-width="0.7"/><line x1="53.3" y1="11" x2="53.3" y2="143" stroke="#e3e3e3" stroke-width="0.7"/><line x1="68.8" y1="11" x2="68.8" y2="143" stroke="#e3e3e3" stroke-width="0.7"/><line x1="84.2" y1="11" x2="84.2" y2="143" stroke="#e3e3e3" stroke-width="0.7"/><line x1="99.6" y1="11" x2="99.6" y2="143" stroke="#e3e3e3" stroke-width="0.7"/><line x1="115" y1="11" x2="115" y2="143" stroke="#bdbdbd" stroke-width="0.7"/><line x1="130.5" y1="11" x2="130.5" y2="143" stroke="#e3e3e3" stroke-width="0.7"/><line x1="145.9" y1="11" x2="145.9" y2="143" stroke="#e3e3e3" stroke-width="0.7"/><line x1="161.3" y1="11" x2="161.3" y2="143" stroke="#e3e3e3" stroke-width="0.7"/><line x1="176.8" y1="11" x2="176.8" y2="143" stroke="#e3e3e3" stroke-width="0.7"/><line x1="192.2" y1="11" x2="192.2" y2="143" stroke="#e3e3e3" stroke-width="0.7"/><line x1="37.9" y1="143" x2="192.2" y2="143" stroke="#e3e3e3" stroke-width="0.7"/><line x1="37.9" y1="134.2" x2="192.2" y2="134.2" stroke="#e3e3e3" stroke-width="0.7"/><line x1="37.9" y1="125.4" x2="192.2" y2="125.4" stroke="#e3e3e3" stroke-width="0.7"/><line x1="37.9" y1="116.6" x2="192.2" y2="116.6" stroke="#e3e3e3" stroke-width="0.7"/><line x1="37.9" y1="107.8" x2="192.2" y2="107.8" stroke="#e3e3e3" stroke-width="0.7"/><line x1="37.9" y1="99" x2="192.2" y2="99" stroke="#bdbdbd" stroke-width="0.7"/><line x1="37.9" y1="90.2" x2="192.2" y2="90.2" stroke="#e3e3e3" stroke-width="0.7"/><line x1="37.9" y1="81.4" x2="192.2" y2="81.4" stroke="#e3e3e3" stroke-width="0.7"/><line x1="37.9" y1="72.6" x2="192.2" y2="72.6" stroke="#e3e3e3" stroke-width="0.7"/><line x1="37.9" y1="63.8" x2="192.2" y2="63.8" stroke="#e3e3e3" stroke-width="0.7"/><line x1="37.9" y1="55" x2="192.2" y2="55" stroke="#bdbdbd" stroke-width="0.7"/><line x1="37.9" y1="46.2" x2="192.2" y2="46.2" stroke="#e3e3e3" stroke-width="0.7"/><line x1="37.9" y1="37.4" x2="192.2" y2="37.4" stroke="#e3e3e3" stroke-width="0.7"/><line x1="37.9" y1="28.6" x2="192.2" y2="28.6" stroke="#e3e3e3" stroke-width="0.7"/><line x1="37.9" y1="19.8" x2="192.2" y2="19.8" stroke="#e3e3e3" stroke-width="0.7"/><line x1="37.9" y1="11" x2="192.2" y2="11" stroke="#e3e3e3" stroke-width="0.7"/><line x1="37.9" y1="143" x2="192.2" y2="143" stroke="#6a6a6a" stroke-width="1.2"/><line x1="33.9" y1="143" x2="37.9" y2="143" stroke="#555" stroke-width="0.9"/><text x="31.4" y="145.9" text-anchor="end" font-size="8.2" fill="#3c3c3c">0</text><line x1="33.9" y1="99" x2="37.9" y2="99" stroke="#555" stroke-width="0.9"/><text x="31.4" y="101.9" text-anchor="end" font-size="8.2" fill="#3c3c3c">100</text><line x1="33.9" y1="55" x2="37.9" y2="55" stroke="#555" stroke-width="0.9"/><text x="31.4" y="57.9" text-anchor="end" font-size="8.2" fill="#3c3c3c">200</text><line x1="33.9" y1="11" x2="37.9" y2="11" stroke="#555" stroke-width="0.9"/><text x="31.4" y="13.9" text-anchor="end" font-size="8.2" fill="#3c3c3c">300</text><line x1="37.9" y1="143" x2="37.9" y2="148" stroke="#555" stroke-width="1"/><text x="37.9" y="159.3" text-anchor="middle" font-size="8.2" fill="#3c3c3c">300</text><line x1="115" y1="143" x2="115" y2="148" stroke="#555" stroke-width="1"/><text x="115" y="159.3" text-anchor="middle" font-size="8.2" fill="#3c3c3c">400</text><line x1="192.2" y1="143" x2="192.2" y2="148" stroke="#555" stroke-width="1"/><text x="192.2" y="159.3" text-anchor="middle" font-size="8.2" fill="#3c3c3c">500</text><text x="115.5" y="169.2" text-anchor="middle" font-size="8.4" fill="#333">Position[pix]</text><text transform="translate(16 76.5) rotate(-90)" text-anchor="middle" font-size="8.4" fill="#333">Intensity[%]</text><text x="102" y="12.3" text-anchor="middle" font-size="10" fill="#333">X-Plot</text><path d="M37.9 143 L39.9 143 L42.6 143 L45.9 143 L49.3 143 L52.6 143 L55.4 143 L57.8 142.6 L60.1 142.2 L62.3 141.7 L64.3 141.4 L66.2 139.8 L68.1 138.8 L69.8 136.7 L71.4 134.7 L73 133.4 L74.4 131 L75.8 127 L77.1 125.4 L78.4 122.7 L79.6 118.3 L80.7 116.2 L81.7 112.4 L82.7 109.9 L83.5 106.7 L84.1 104.7 L84.6 101.1 L85 97.9 L85.4 95.8 L85.7 92.8 L86.2 90.3 L86.7 88.9 L87.3 85.2 L87.9 83.1 L88.5 81.2 L89.2 79.3 L89.8 75.5 L90.5 73.7 L91.3 70.8 L92.1 68 L92.8 65.8 L93.6 63.1 L94.3 61.8 L94.9 59 L95.5 57.6 L96 54.8 L96.6 53.1 L97.2 52.8 L98 51.2 L98.9 49.7 L100 47 L101.1 46.7 L102.3 45.4 L103.3 45.3 L104.3 44.9 L105.2 45.6 L106 46.7 L106.7 47.7 L107.4 49.3 L108.1 50.5 L108.8 52.5 L109.5 53.6 L110.1 55.3 L110.7 56.7 L111.3 59 L111.8 61.8 L112.4 62.7 L113 64.9 L113.6 67.7 L114.2 71 L114.8 73.6 L115.4 77.4 L116 79.1 L116.6 82.2 L117.2 85.4 L117.9 88.5 L118.5 89.9 L119.1 92.3 L119.7 96.6 L120.2 98.1 L120.6 101.6 L121 104.9 L121.4 107.4 L121.9 109.2 L122.4 111.5 L122.9 115.3 L123.4 116.5 L123.9 119.6 L124.5 120.5 L125.2 123.2 L126 124.3 L126.9 126.3 L127.8 129.5 L128.8 130.9 L130 134.4 L131.4 136.8 L133.2 137.5 L135.1 139.9 L137 140.8 L139.1 141.3 L141.8 141.9 L145.2 142.5 L149.5 143 L155.6 143 L163.4 143 L171.9 143 L180.2 143 L187.3 143 L192.2 143" fill="none" stroke="#4caf4c" stroke-width="1.2"/><path d="M37.9 143 L38.7 143 L39.4 143 L40.2 143 L41 143 L41.8 143 L42.5 143 L43.3 143 L44.1 143 L44.8 142.9 L45.6 142.9 L46.4 142.9 L47.2 142.9 L47.9 142.9 L48.7 142.9 L49.5 142.8 L50.2 142.8 L51 142.8 L51.8 142.7 L52.6 142.7 L53.3 142.6 L54.1 142.5 L54.9 142.4 L55.6 142.3 L56.4 142.2 L57.2 142.1 L58 141.9 L58.7 141.8 L59.5 141.6 L60.3 141.3 L61 141.1 L61.8 140.8 L62.6 140.5 L63.4 140.1 L64.1 139.7 L64.9 139.3 L65.7 138.8 L66.4 138.2 L67.2 137.6 L68 136.9 L68.8 136.1 L69.5 135.3 L70.3 134.4 L71.1 133.4 L71.8 132.4 L72.6 131.2 L73.4 130 L74.2 128.6 L74.9 127.2 L75.7 125.7 L76.5 124 L77.2 122.3 L78 120.5 L78.8 118.5 L79.6 116.5 L80.3 114.4 L81.1 112.2 L81.9 109.9 L82.6 107.6 L83.4 105.1 L84.2 102.6 L85 100.1 L85.7 97.5 L86.5 94.9 L87.3 92.3 L88 89.7 L88.8 87 L89.6 84.5 L90.4 81.9 L91.1 79.4 L91.9 77 L92.7 74.7 L93.4 72.4 L94.2 70.3 L95 68.4 L95.8 66.5 L96.5 64.9 L97.3 63.4 L98.1 62.1 L98.8 60.9 L99.6 60 L100.4 59.3 L101.2 58.8 L101.9 58.6 L102.7 58.5 L103.5 58.7 L104.2 59.1 L105 59.7 L105.8 60.5 L106.6 61.6 L107.3 62.8 L108.1 64.2 L108.9 65.8 L109.6 67.6 L110.4 69.5 L111.2 71.6 L112 73.8 L112.7 76.1 L113.5 78.4 L114.3 80.9 L115 83.4 L115.8 86 L116.6 88.6 L117.4 91.2 L118.1 93.9 L118.9 96.5 L119.7 99.1 L120.5 101.6 L121.2 104.1 L122 106.6 L122.8 109 L123.5 111.3 L124.3 113.5 L125.1 115.7 L125.9 117.7 L126.6 119.7 L127.4 121.6 L128.2 123.3 L128.9 125 L129.7 126.6 L130.5 128.1 L131.3 129.4 L132 130.7 L132.8 131.9 L133.6 133 L134.3 134 L135.1 135 L135.9 135.8 L136.7 136.6 L137.4 137.3 L138.2 138 L139 138.5 L139.7 139.1 L140.5 139.5 L141.3 140 L142.1 140.3 L142.8 140.7 L143.6 141 L144.4 141.3 L145.1 141.5 L145.9 141.7 L146.7 141.9 L147.5 142 L148.2 142.2 L149 142.3 L149.8 142.4 L150.5 142.5 L151.3 142.6 L152.1 142.6 L152.9 142.7 L153.6 142.7 L154.4 142.8 L155.2 142.8 L155.9 142.8 L156.7 142.9 L157.5 142.9 L158.3 142.9 L159 142.9 L159.8 142.9 L160.6 143 L161.3 143 L162.1 143 L162.9 143 L163.7 143 L164.4 143 L165.2 143 L166 143 L166.7 143 L167.5 143 L168.3 143 L169.1 143 L169.8 143 L170.6 143 L171.4 143 L172.1 143 L172.9 143 L173.7 143 L174.5 143 L175.2 143 L176 143 L176.8 143 L177.5 143 L178.3 143 L179.1 143 L179.9 143 L180.6 143 L181.4 143 L182.2 143 L182.9 143 L183.7 143 L184.5 143 L185.3 143 L186 143 L186.8 143 L187.6 143 L188.3 143 L189.1 143 L189.9 143 L190.7 143 L191.4 143 L192.2 143" fill="none" stroke="#f45c5c" stroke-width="1.2"/><g transform="translate(187.5 1.8)" stroke="#3a3a3a" stroke-width="1.7" stroke-linecap="round" fill="#3a3a3a"><line x1="2" y1="2" x2="6.3" y2="6.3"/><line x1="14" y1="2" x2="9.7" y2="6.3"/><line x1="2" y1="14" x2="6.3" y2="9.7"/><line x1="14" y1="14" x2="9.7" y2="9.7"/><path d="M0.8 0.8 L5.2 1.2 L1.2 5.2Z" stroke-width="0.8"/><path d="M15.2 0.8 L10.8 1.2 L14.8 5.2Z" stroke-width="0.8"/><path d="M0.8 15.2 L5.2 14.8 L1.2 10.8Z" stroke-width="0.8"/><path d="M15.2 15.2 L10.8 14.8 L14.8 10.8Z" stroke-width="0.8"/></g></svg></div>
<div class="plot" style="top:401px"><svg width="205" height="180" viewBox="0 0 205 180" style="position:absolute;left:0;top:0"><line x1="37.9" y1="11" x2="37.9" y2="143" stroke="#e3e3e3" stroke-width="0.7"/><line x1="53.3" y1="11" x2="53.3" y2="143" stroke="#e3e3e3" stroke-width="0.7"/><line x1="68.8" y1="11" x2="68.8" y2="143" stroke="#e3e3e3" stroke-width="0.7"/><line x1="84.2" y1="11" x2="84.2" y2="143" stroke="#e3e3e3" stroke-width="0.7"/><line x1="99.6" y1="11" x2="99.6" y2="143" stroke="#e3e3e3" stroke-width="0.7"/><line x1="115" y1="11" x2="115" y2="143" stroke="#bdbdbd" stroke-width="0.7"/><line x1="130.5" y1="11" x2="130.5" y2="143" stroke="#e3e3e3" stroke-width="0.7"/><line x1="145.9" y1="11" x2="145.9" y2="143" stroke="#e3e3e3" stroke-width="0.7"/><line x1="161.3" y1="11" x2="161.3" y2="143" stroke="#e3e3e3" stroke-width="0.7"/><line x1="176.8" y1="11" x2="176.8" y2="143" stroke="#e3e3e3" stroke-width="0.7"/><line x1="192.2" y1="11" x2="192.2" y2="143" stroke="#e3e3e3" stroke-width="0.7"/><line x1="37.9" y1="143" x2="192.2" y2="143" stroke="#e3e3e3" stroke-width="0.7"/><line x1="37.9" y1="134.2" x2="192.2" y2="134.2" stroke="#e3e3e3" stroke-width="0.7"/><line x1="37.9" y1="125.4" x2="192.2" y2="125.4" stroke="#e3e3e3" stroke-width="0.7"/><line x1="37.9" y1="116.6" x2="192.2" y2="116.6" stroke="#e3e3e3" stroke-width="0.7"/><line x1="37.9" y1="107.8" x2="192.2" y2="107.8" stroke="#e3e3e3" stroke-width="0.7"/><line x1="37.9" y1="99" x2="192.2" y2="99" stroke="#bdbdbd" stroke-width="0.7"/><line x1="37.9" y1="90.2" x2="192.2" y2="90.2" stroke="#e3e3e3" stroke-width="0.7"/><line x1="37.9" y1="81.4" x2="192.2" y2="81.4" stroke="#e3e3e3" stroke-width="0.7"/><line x1="37.9" y1="72.6" x2="192.2" y2="72.6" stroke="#e3e3e3" stroke-width="0.7"/><line x1="37.9" y1="63.8" x2="192.2" y2="63.8" stroke="#e3e3e3" stroke-width="0.7"/><line x1="37.9" y1="55" x2="192.2" y2="55" stroke="#bdbdbd" stroke-width="0.7"/><line x1="37.9" y1="46.2" x2="192.2" y2="46.2" stroke="#e3e3e3" stroke-width="0.7"/><line x1="37.9" y1="37.4" x2="192.2" y2="37.4" stroke="#e3e3e3" stroke-width="0.7"/><line x1="37.9" y1="28.6" x2="192.2" y2="28.6" stroke="#e3e3e3" stroke-width="0.7"/><line x1="37.9" y1="19.8" x2="192.2" y2="19.8" stroke="#e3e3e3" stroke-width="0.7"/><line x1="37.9" y1="11" x2="192.2" y2="11" stroke="#e3e3e3" stroke-width="0.7"/><line x1="37.9" y1="143" x2="192.2" y2="143" stroke="#6a6a6a" stroke-width="1.2"/><line x1="33.9" y1="143" x2="37.9" y2="143" stroke="#555" stroke-width="0.9"/><text x="31.4" y="145.9" text-anchor="end" font-size="8.2" fill="#3c3c3c">0</text><line x1="33.9" y1="99" x2="37.9" y2="99" stroke="#555" stroke-width="0.9"/><text x="31.4" y="101.9" text-anchor="end" font-size="8.2" fill="#3c3c3c">100</text><line x1="33.9" y1="55" x2="37.9" y2="55" stroke="#555" stroke-width="0.9"/><text x="31.4" y="57.9" text-anchor="end" font-size="8.2" fill="#3c3c3c">200</text><line x1="33.9" y1="11" x2="37.9" y2="11" stroke="#555" stroke-width="0.9"/><text x="31.4" y="13.9" text-anchor="end" font-size="8.2" fill="#3c3c3c">300</text><line x1="37.9" y1="143" x2="37.9" y2="148" stroke="#555" stroke-width="1"/><text x="37.9" y="159.3" text-anchor="middle" font-size="8.2" fill="#3c3c3c">300</text><line x1="115" y1="143" x2="115" y2="148" stroke="#555" stroke-width="1"/><text x="115" y="159.3" text-anchor="middle" font-size="8.2" fill="#3c3c3c">400</text><line x1="192.2" y1="143" x2="192.2" y2="148" stroke="#555" stroke-width="1"/><text x="192.2" y="159.3" text-anchor="middle" font-size="8.2" fill="#3c3c3c">500</text><text x="115.5" y="169.2" text-anchor="middle" font-size="8.4" fill="#333">Position[pix]</text><text transform="translate(16 76.5) rotate(-90)" text-anchor="middle" font-size="8.4" fill="#333">Intensity[%]</text><text x="102" y="12.3" text-anchor="middle" font-size="10" fill="#333">Y-Plot</text><path d="M37.9 143 L41.6 143 L47 143 L53.3 143 L59.7 143 L65.6 143 L70 143 L73 142.6 L75.1 141.9 L76.6 141.1 L77.8 140.8 L78.8 140.3 L80 139.4 L81.3 140.1 L82.5 140.2 L83.5 141.5 L84.5 142.3 L85.4 142.7 L86.3 142.6 L87 141.8 L87.7 140.2 L88.3 139.1 L88.8 137.3 L89.3 135.3 L89.9 133.2 L90.5 131 L91.1 128.5 L91.7 125.8 L92.3 122.8 L92.9 120.8 L93.5 118.9 L94.1 117 L94.6 116 L95.1 114.7 L95.6 113.2 L96.2 112.9 L96.8 112.6 L97.4 113.3 L98.1 113.6 L98.8 114.4 L99.5 116 L100.2 116.4 L100.8 116.9 L101.3 117.8 L101.7 117.6 L102.2 118 L102.6 117.7 L103 117.4 L103.5 116 L104 114.1 L104.7 112.3 L105.3 109.4 L105.9 105.7 L106.5 102 L107.1 99.2 L107.6 95.4 L108 91.3 L108.4 87.3 L108.9 83.1 L109.3 79.1 L109.8 75.4 L110.4 71.7 L111 68.7 L111.6 65.5 L112.3 62.2 L112.9 60.1 L113.5 57.1 L114.1 54.6 L114.6 52.7 L115.2 50.7 L115.7 48.4 L116.2 47.4 L116.7 46.5 L117.1 45.8 L117.5 45.6 L117.9 46.5 L118.2 47 L118.6 47.7 L118.9 48.1 L119.2 49.3 L119.5 50.1 L119.8 51.9 L120 53 L120.3 54.1 L120.7 55.1 L121.1 56.6 L121.5 57.8 L121.9 58.8 L122.4 59.6 L122.9 61.3 L123.4 62.7 L123.9 65 L124.5 68.4 L125.1 71.4 L125.8 74.2 L126.4 77.6 L127 80.7 L127.6 84.4 L128.2 88 L128.8 91.3 L129.4 94.2 L130 97.9 L130.7 100.9 L131.4 103.6 L132.1 106.1 L132.9 108.4 L133.7 110.3 L134.4 113.2 L135.2 115.7 L135.9 117.4 L136.6 120.1 L137.4 122.6 L138.1 125.6 L138.9 127.4 L139.7 129.4 L140.7 131.7 L141.7 132.6 L142.7 133.8 L143.8 134.9 L144.9 136 L146 137 L147.2 137.7 L148.4 138.3 L149.6 138.9 L150.9 138.8 L152.1 139.4 L153.3 139.4 L154.2 140.7 L154.7 140.5 L155.1 141.5 L155.9 142.1 L157.4 142.6 L160 143 L164.3 143 L170.1 143 L176.5 143 L182.9 143 L188.4 143 L192.2 143" fill="none" stroke="#4caf4c" stroke-width="1.2"/><path d="M37.9 143 L38.7 143 L39.4 143 L40.2 143 L41 143 L41.8 143 L42.5 143 L43.3 143 L44.1 143 L44.8 143 L45.6 143 L46.4 143 L47.2 143 L47.9 143 L48.7 143 L49.5 143 L50.2 143 L51 143 L51.8 143 L52.6 143 L53.3 143 L54.1 143 L54.9 142.9 L55.6 142.9 L56.4 142.9 L57.2 142.9 L58 142.9 L58.7 142.9 L59.5 142.9 L60.3 142.8 L61 142.8 L61.8 142.8 L62.6 142.7 L63.4 142.7 L64.1 142.6 L64.9 142.6 L65.7 142.5 L66.4 142.5 L67.2 142.4 L68 142.3 L68.8 142.2 L69.5 142.1 L70.3 141.9 L71.1 141.8 L71.8 141.6 L72.6 141.5 L73.4 141.3 L74.2 141.1 L74.9 140.8 L75.7 140.5 L76.5 140.3 L77.2 139.9 L78 139.6 L78.8 139.2 L79.6 138.8 L80.3 138.3 L81.1 137.9 L81.9 137.3 L82.6 136.8 L83.4 136.1 L84.2 135.5 L85 134.8 L85.7 134 L86.5 133.2 L87.3 132.4 L88 131.5 L88.8 130.5 L89.6 129.5 L90.4 128.5 L91.1 127.4 L91.9 126.2 L92.7 125 L93.4 123.8 L94.2 122.5 L95 121.2 L95.8 119.8 L96.5 118.4 L97.3 117 L98.1 115.6 L98.8 114.1 L99.6 112.6 L100.4 111.1 L101.2 109.6 L101.9 108.1 L102.7 106.6 L103.5 105.1 L104.2 103.7 L105 102.2 L105.8 100.8 L106.6 99.5 L107.3 98.2 L108.1 96.9 L108.9 95.7 L109.6 94.6 L110.4 93.6 L111.2 92.6 L112 91.8 L112.7 91 L113.5 90.3 L114.3 89.7 L115 89.2 L115.8 88.9 L116.6 88.6 L117.4 88.5 L118.1 88.4 L118.9 88.5 L119.7 88.7 L120.5 89 L121.2 89.4 L122 89.9 L122.8 90.6 L123.5 91.3 L124.3 92.1 L125.1 93 L125.9 94 L126.6 95.1 L127.4 96.2 L128.2 97.4 L128.9 98.7 L129.7 100 L130.5 101.4 L131.3 102.8 L132 104.3 L132.8 105.7 L133.6 107.2 L134.3 108.7 L135.1 110.2 L135.9 111.7 L136.7 113.2 L137.4 114.7 L138.2 116.2 L139 117.6 L139.7 119 L140.5 120.4 L141.3 121.7 L142.1 123 L142.8 124.3 L143.6 125.5 L144.4 126.7 L145.1 127.8 L145.9 128.9 L146.7 129.9 L147.5 130.9 L148.2 131.8 L149 132.7 L149.8 133.6 L150.5 134.3 L151.3 135.1 L152.1 135.7 L152.9 136.4 L153.6 137 L154.4 137.5 L155.2 138.1 L155.9 138.5 L156.7 139 L157.5 139.4 L158.3 139.7 L159 140.1 L159.8 140.4 L160.6 140.7 L161.3 140.9 L162.1 141.1 L162.9 141.4 L163.7 141.5 L164.4 141.7 L165.2 141.9 L166 142 L166.7 142.1 L167.5 142.2 L168.3 142.3 L169.1 142.4 L169.8 142.5 L170.6 142.6 L171.4 142.6 L172.1 142.7 L172.9 142.7 L173.7 142.7 L174.5 142.8 L175.2 142.8 L176 142.8 L176.8 142.9 L177.5 142.9 L178.3 142.9 L179.1 142.9 L179.9 142.9 L180.6 142.9 L181.4 142.9 L182.2 143 L182.9 143 L183.7 143 L184.5 143 L185.3 143 L186 143 L186.8 143 L187.6 143 L188.3 143 L189.1 143 L189.9 143 L190.7 143 L191.4 143 L192.2 143" fill="none" stroke="#f45c5c" stroke-width="1.2"/><g transform="translate(187.5 1.8)" stroke="#3a3a3a" stroke-width="1.7" stroke-linecap="round" fill="#3a3a3a"><line x1="2" y1="2" x2="6.3" y2="6.3"/><line x1="14" y1="2" x2="9.7" y2="6.3"/><line x1="2" y1="14" x2="6.3" y2="9.7"/><line x1="14" y1="14" x2="9.7" y2="9.7"/><path d="M0.8 0.8 L5.2 1.2 L1.2 5.2Z" stroke-width="0.8"/><path d="M15.2 0.8 L10.8 1.2 L14.8 5.2Z" stroke-width="0.8"/><path d="M0.8 15.2 L5.2 14.8 L1.2 10.8Z" stroke-width="0.8"/><path d="M15.2 15.2 L10.8 14.8 L14.8 10.8Z" stroke-width="0.8"/></g></svg></div>

<div id="sep" class="a"></div>

<!-- logo -->
<div id="logo" class="a">
 <svg class="a" style="left:0;top:0" width="281" height="56" viewBox="793 26 281 56">
  <g fill="#1b2e96">
   <polygon points="842.4,28.6 825.8,44.9 842.4,44.9"/>
   <polygon points="823.7,46.5 823.7,63.5 840.5,63.5"/>
   <polygon points="844.5,46 860.7,46 860.7,61.7"/>
   <polygon points="842.9,64.1 859.5,64.1 842.9,80.6"/>
   <!-- D -->
   <path d="M869.6 41.5 H878.5 Q889.8 41.5 889.8 52.8 V56.4 Q889.8 67.7 878.5 67.7 H869.6 V62.3 H878 Q884 62.3 884 56.4 V52.8 Q884 46.9 878 46.9 H869.6 Z"/>
   <!-- I -->
   <rect x="892.5" y="41.3" width="5.4" height="26.6"/>
   <!-- M -->
   <path d="M902.5 41.3 H922.7 A6.5 6.5 0 0 1 929.2 47.8 V67.9 H923.8 V48.5 Q923.8 46.7 922 46.7 H918.3 V67.9 H913 V46.7 H907.9 V67.9 H902.5 Z"/>
   <!-- E -->
   <rect x="932.5" y="41.3" width="15" height="5.4"/>
   <path d="M932.5 52.5 H947.5 V57.5 H937.9 V62.5 H947.5 V67.9 H932.5 Z"/>
   <!-- N -->
   <path d="M951.4 41.3 H962.5 A6 6 0 0 1 968.5 47.3 V67.9 H963.4 V48.5 Q963.4 46.7 961.6 46.7 H956.5 V67.9 H951.4 Z"/>
   <!-- S -->
   <path d="M989.5 41.4 V46.6 H978.5 A2.8 2.8 0 0 0 978.5 52.2 H982 A7.75 7.75 0 0 1 982 67.7 H972.2 V62.5 H982 A2.55 2.55 0 0 0 982 57.4 H978.5 A6.8 8 0 0 1 978.5 41.4 Z"/>
   <!-- I -->
   <rect x="993.5" y="41.3" width="5.2" height="26.6"/>
   <!-- O -->
   <path fill-rule="evenodd" d="M1012 41.3 A10.2 10.2 0 0 1 1022.2 51.5 V57.7 A10.2 10.2 0 0 1 1001.8 57.7 V51.5 A10.2 10.2 0 0 1 1012 41.3 Z M1012 46.7 A4.9 4.9 0 0 0 1007.1 51.6 V57.6 A4.9 4.9 0 0 0 1016.9 57.6 V51.6 A4.9 4.9 0 0 0 1012 46.7 Z"/>
   <!-- N -->
   <path d="M1025 41.3 H1036.6 A6 6 0 0 1 1042.6 47.3 V67.9 H1037.4 V48.5 Q1037.4 46.7 1035.6 46.7 H1030.2 V67.9 H1025 Z"/>
  </g>
 </svg>
</div>

<!-- form -->
<div class="lbl" style="left:808px;top:94px;width:60px">测试任务</div>
<div class="inp" style="top:92px;height:18px;line-height:18px;padding-left:5px">DefaultTask<div class="chev"></div></div>
<div class="a" style="left:998px;top:90px;width:76px;height:21px;background:#147ac6;color:#fff;font-size:9px;line-height:24px;text-align:center;font-weight:500">任务设置</div>
<div class="lbl" style="left:808px;top:119px;width:60px">测试波长</div>
<div class="inp" style="top:118px;height:17px;line-height:15px;text-align:center;font-size:10.5px;border-radius:0">635</div>
<div class="lbl" style="left:1001px;top:120px;color:#9ea3cc">nm</div>
<div class="lbl" style="left:804px;top:145px;width:68px">设置中心位置</div>
<div class="inp" style="top:142px;height:18px;line-height:20px;padding-left:5px;font-size:9px">参考点为探头中心<div class="chev"></div></div>
<div class="lbl" style="left:808px;top:170px;width:60px">测试模式</div>
<div class="lbl" style="left:889px;top:170px">相机</div>

<!-- table -->
<div id="tbl" class="a">
 <div class="a" style="left:5px;top:5px;width:271px;height:20px;background:#fff;border-top:1.5px solid #c4c4c4;border-bottom:1.5px solid #c4c4c4;font-size:9.5px;color:#444">
  <span class="a" style="left:0;width:111px;text-align:center;top:3px">参数</span>
  <span class="a" style="left:111px;width:27px;text-align:center;top:3px;border-left:1px solid #c8c8c8;height:17px;top:0;line-height:17px">单位</span>
  <span class="a" style="left:138px;width:33px;text-align:center;border-left:1px solid #c8c8c8;height:17px;top:0;line-height:17px">最小</span>
  <span class="a" style="left:171px;width:50px;text-align:center;border-left:1px solid #c8c8c8;height:17px;top:0;line-height:17px">最大</span>
  <span class="a" style="left:221px;width:50px;text-align:center;border-left:1px solid #c8c8c8;height:17px;top:0;line-height:17px">结果</span>
 </div>
 <div class="row" style="top:25px;height:31px"><span style="left:34px;top:-0.5px;line-height:31px;font-size:11px;font-weight:bold;color:#333">计算结果</span></div>
 <div class="row" style="top:57px"><span class="c0">光束宽度(4-Sigma)X</span><span class="c1">um</span><span class="c2">0.0</span><span class="c3">800.0</span><span class="c4">415.22</span></div>
 <div class="row" style="top:90px"><span class="c0">光束宽度(4-Sigma)Y</span><span class="c1">um</span><span class="c2">0.0</span><span class="c3">800.0</span><span class="c4">430.93</span></div>
 <div class="row" style="top:122px"><span class="c0">方位角(4-Sigma)</span><span class="c1">°</span><span class="c2">0.0</span><span class="c3">90.0</span><span class="c4">0.94</span></div>
 <div class="row" style="top:155px"><span class="c0">椭圆度(4-Sigma)</span><span class="c1">%</span><span class="c2">0.0</span><span class="c3">100.0</span><span class="c4">96.36%</span></div>
 <div class="row" style="top:187px"><span class="c0">光斑直径(4-Sigma)</span><span class="c1">um</span><span class="c2">0.0</span><span class="c3">800.0</span><span class="c4">423.08</span></div>
 <div class="row" style="top:220px"><span class="c0">峰值位置横X</span><span class="c1">um</span><span class="c2">0.0</span><span class="c3">11264.0</span><span class="c4">2216.50</span></div>
 <div class="row" style="top:252px;height:8px"></div>
</div>

<!-- buttons -->
<div class="btn" style="left:793px;top:459px">
 <svg style="left:32px;top:4px" width="18" height="18"><circle cx="9" cy="9" r="7.6" fill="none" stroke="#fff" stroke-width="1.4"/><rect x="6.2" y="6.2" width="5.6" height="5.6" fill="#fff"/></svg>
 <span class="t" style="left:56px">停止采集</span>
</div>
<div class="btn" style="left:937px;top:459px;box-shadow:inset 0 0 0 1px #5b8fa0">
 <svg style="left:33px;top:6px" width="14" height="14"><rect x="1" y="1" width="12" height="12" fill="none" stroke="#fff" stroke-width="1.2"/><path d="M3 9 L5.5 6 L7.5 8 L10.5 4" fill="none" stroke="#fff" stroke-width="1"/><line x1="3" y1="10.5" x2="11" y2="10.5" stroke="#fff" stroke-width="0.8"/></svg>
 <span class="t" style="left:54px">时间绘图</span>
</div>
<div class="btn" style="left:793px;top:491px">
 <svg style="left:32px;top:4px" width="18" height="18"><circle cx="9" cy="9" r="7.6" fill="none" stroke="#fff" stroke-width="1.4"/><path d="M6.5 5.8 L10.5 9 L6.5 12.2Z" fill="#fff"/><rect x="10.8" y="5.8" width="1.3" height="6.4" fill="#fff"/></svg>
 <span class="t" style="left:56px">单帧测试</span>
</div>
<div class="btn" style="left:937px;top:491px;background:#165db2;color:#9fb6e2;font-weight:500">
 <svg style="left:32px;top:4px" width="18" height="18"><circle cx="9" cy="9" r="7.6" fill="none" stroke="#9fb6e2" stroke-width="1.3"/><path d="M4.5 6.5 L7 9 L4.5 11.5 M7.5 6.5 L10 9 L7.5 11.5 M10.5 6.5 L13 9 L10.5 11.5" fill="none" stroke="#9fb6e2" stroke-width="1.1"/></svg>
 <span class="t" style="left:56px">连续测试</span>
</div>
<div class="btn" style="left:793px;top:523px">
 <svg style="left:32px;top:4px" width="18" height="18"><rect x="1.5" y="1.5" width="14" height="9.5" fill="none" stroke="#fff" stroke-width="1.3"/><line x1="4" y1="13" x2="9" y2="13" stroke="#fff" stroke-width="1.2"/><circle cx="13" cy="13.5" r="3.2" fill="#147ac6" stroke="#fff" stroke-width="1.2"/><circle cx="13" cy="13.5" r="1" fill="#fff"/></svg>
 <span class="t" style="left:56px">系统设置</span>
</div>
<div class="btn" style="left:937px;top:523px">
 <svg style="left:31px;top:4px" width="18" height="18"><g stroke="#fff" stroke-width="1.1"><line x1="8" y1="1" x2="8" y2="5"/><line x1="1" y1="8" x2="5" y2="8"/><line x1="3" y1="3" x2="5.2" y2="5.2"/><line x1="13" y1="3" x2="10.8" y2="5.2"/><line x1="3" y1="13" x2="5.2" y2="10.8"/></g><circle cx="8" cy="8" r="1.3" fill="#fff"/><circle cx="13" cy="13" r="3.6" fill="none" stroke="#fff" stroke-width="1.2"/><circle cx="13" cy="13" r="1.5" fill="none" stroke="#fff" stroke-width="0.9"/></svg>
 <span class="t" style="left:56px">光束设置</span>
</div>
<div class="btn" style="left:793px;top:556px">
 <svg style="left:33px;top:5px" width="16" height="16"><path d="M9 1 H2 V15 H8 M9 1 L13 5 V9" fill="none" stroke="#fff" stroke-width="1.3"/><path d="M9 1 V5 H13" fill="none" stroke="#fff" stroke-width="1"/><path d="M8.5 12.5 H12.5" stroke="#fff" stroke-width="1.4"/><path d="M11.5 10 L15 12.5 L11.5 15Z" fill="#fff"/></svg>
 <span class="t" style="left:56px">保存结果</span>
</div>
<div class="btn" style="left:937px;top:556px">
 <svg style="left:33px;top:5px" width="16" height="16"><path d="M1.5 1 H9.5 L14 5.5 V15 H1.5 Z" fill="none" stroke="#fff" stroke-width="1.3"/><path d="M9.5 1 V5.5 H14" fill="none" stroke="#fff" stroke-width="1"/><g stroke="#fff" stroke-width="1"><line x1="4" y1="6" x2="8" y2="6"/><line x1="4" y1="8.5" x2="11.5" y2="8.5"/><line x1="4" y1="11" x2="11.5" y2="11"/><line x1="4" y1="13" x2="11.5" y2="13"/></g></svg>
 <span class="t" style="left:56px">生成报告</span>
</div>

<!-- status bar -->
<div id="status" class="a">
 <span style="left:7px">设备名称：</span><b id="v0" style="left:45.9px">MV-CS040-A0UM</b>
 <span style="left:121.3px">采集帧率：</span><b id="v1" style="left:161px">64fps</b>
 <span style="left:188.9px">增益(dB)：</span><b id="v2" style="left:227.8px">0</b>
 <span style="left:238.9px">宽高：</span><b id="v3" style="left:262px">2048*2048</b>
 <span style="left:311px">曝光时间(μs)：</span><b id="v4" style="left:363.9px">45</b>
 <span style="left:776.3px">系统时间：</span><b id="v5" style="left:814.8px">2023-09-01 13:50:01</b>
 <span style="left:901.6px">运行时间：</span><b id="v6" style="left:940.7px;letter-spacing:-0.4px">0天0小时17分5秒</b>
 <span style="left:1011.9px">版本：</span><b id="v7" style="left:1034px">V:1.0.0.1</b>
</div>
</body></html>
